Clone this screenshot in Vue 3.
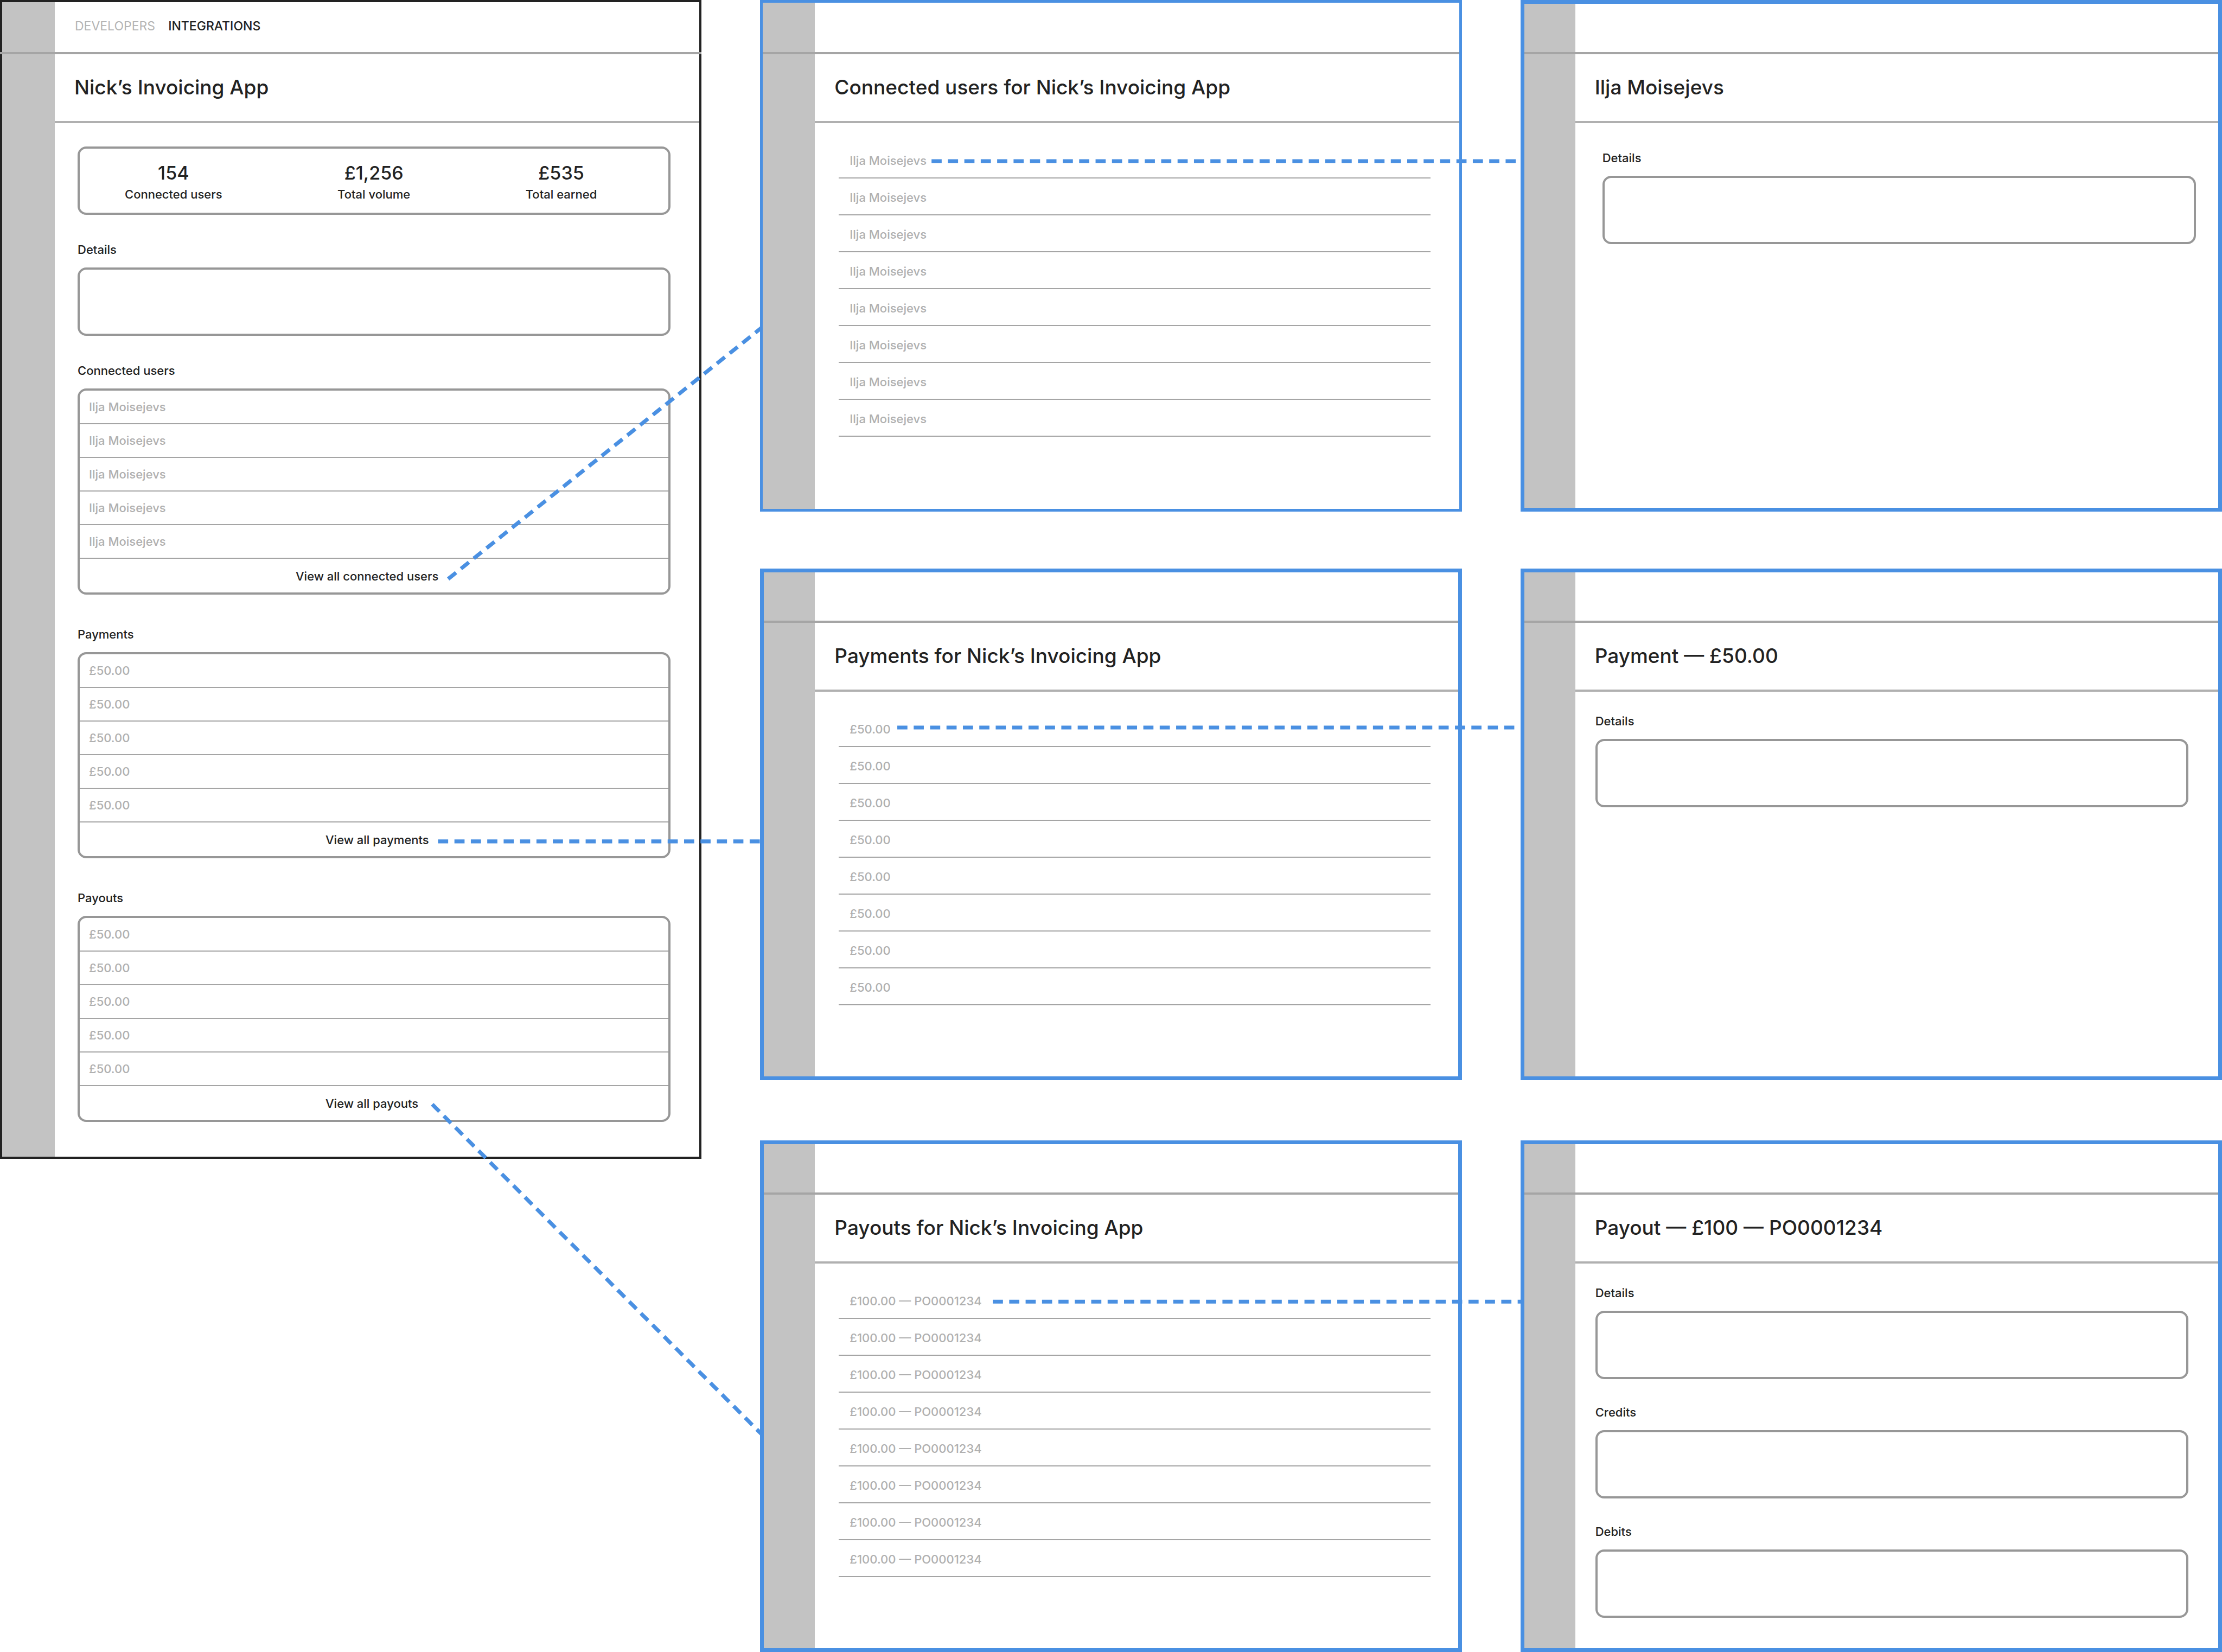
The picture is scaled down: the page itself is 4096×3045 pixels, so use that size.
<script setup>
const appName = 'Nick’s Invoicing App'

const stats = [
  { value: '154', label: 'Connected users' },
  { value: '£1,256', label: 'Total volume' },
  { value: '£535', label: 'Total earned' },
]

const sections = [
  { id: 'users', title: 'Connected users', item: 'Ilja Moisejevs', more: 'View all connected users' },
  { id: 'payments', title: 'Payments', item: '£50.00', more: 'View all payments' },
  { id: 'payouts', title: 'Payouts', item: '£50.00', more: 'View all payouts' },
]

const lists = [
  { id: 'all-users', title: `Connected users for ${appName}`, item: 'Ilja Moisejevs', thin: true },
  { id: 'all-payments', title: `Payments for ${appName}`, item: '£50.00' },
  { id: 'all-payouts', title: `Payouts for ${appName}`, item: '£100.00 — PO0001234' },
]

const details = [
  { id: 'user', title: 'Ilja Moisejevs', panels: ['Details'], inset: true },
  { id: 'payment', title: 'Payment — £50.00', panels: ['Details'] },
  { id: 'payout', title: 'Payout — £100 — PO0001234', panels: ['Details', 'Credits', 'Debits'] },
]

const connectors = [
  { x1: 929, y1: 1200, x2: 1579, y2: 679 },
  { x1: 908, y1: 1744, x2: 1578, y2: 1744 },
  { x1: 896, y1: 2289, x2: 1579, y2: 2973 },
  { x1: 1931, y1: 334, x2: 3152, y2: 334 },
  { x1: 1860, y1: 1508, x2: 3152, y2: 1508 },
  { x1: 2058, y1: 2698, x2: 3154, y2: 2698 },
]
</script>

<template>
  <div class="board">
    <section class="frame frame--source">
      <aside class="sidebar"></aside>
      <nav class="topbar">
        <a class="tab" href="#developers">DEVELOPERS</a>
        <a class="tab tab--active" href="#integrations">INTEGRATIONS</a>
      </nav>
      <header class="heading"><h1 class="title">{{ appName }}</h1></header>
      <main class="content content--source">
        <div class="card stats">
          <div v-for="stat in stats" :key="stat.label" class="stat">
            <span class="stat-value">{{ stat.value }}</span>
            <span class="stat-label">{{ stat.label }}</span>
          </div>
        </div>
        <section class="block">
          <h2 class="label">Details</h2>
          <div class="card"></div>
        </section>
        <div class="block-group">
          <section v-for="section in sections" :key="section.id" class="block">
            <h2 class="label">{{ section.title }}</h2>
            <ul class="card table">
              <li v-for="n in 5" :key="n" class="table-row">{{ section.item }}</li>
              <li class="table-row table-row--more" :class="`table-row--${section.id}`">
                <a class="more" :href="`#all-${section.id}`">{{ section.more }}</a>
              </li>
            </ul>
          </section>
        </div>
      </main>
    </section>

    <div class="column">
      <section
        v-for="list in lists"
        :id="list.id"
        :key="list.id"
        class="frame frame--target"
        :class="{ 'frame--thin': list.thin }"
      >
        <aside class="sidebar"></aside>
        <div class="topbar"></div>
        <header class="heading"><h1 class="title">{{ list.title }}</h1></header>
        <main class="content content--list">
          <ul class="list">
            <li v-for="n in 8" :key="n" class="list-row">{{ list.item }}</li>
          </ul>
        </main>
      </section>
    </div>

    <div class="column">
      <section v-for="detail in details" :id="detail.id" :key="detail.id" class="frame frame--target">
        <aside class="sidebar"></aside>
        <div class="topbar"></div>
        <header class="heading"><h1 class="title">{{ detail.title }}</h1></header>
        <main class="content content--detail" :class="{ 'content--inset': detail.inset }">
          <section v-for="panel in detail.panels" :key="panel" class="block">
            <h2 class="label">{{ panel }}</h2>
            <div class="card"></div>
          </section>
        </main>
      </section>
    </div>

    <svg class="connectors" viewBox="0 0 4606 3424" aria-hidden="true">
      <line v-for="(line, i) in connectors" :key="i" v-bind="line" />
    </svg>
  </div>
</template>

<style>
body {
  margin: 0;
  background: #ffffff;
}
</style>

<style scoped>
.board {
  position: relative;
  display: grid;
  grid-template-columns: repeat(3, minmax(0, 1fr));
  column-gap: 108px;
  align-items: start;
  color: #222222;
  font-family: Inter, "Open Sans", sans-serif;
  font-size: 22px;
  font-weight: 500;
  line-height: 28px;
}

.column {
  display: grid;
  grid-template-rows: 1048px 1054px auto;
  align-items: start;
}

.frame {
  display: grid;
  grid-template-columns: 101px minmax(0, 1fr);
  grid-template-rows: 100px 127px 1fr;
  box-sizing: border-box;
  background: #ffffff;
}

.frame--source {
  outline: 4px solid #222222;
  outline-offset: -4px;
}

.frame--target {
  min-height: 943px;
  outline: 7px solid #4a90e2;
  outline-offset: -7px;
}

.frame--thin {
  outline-width: 5px;
  outline-offset: -5px;
}

.sidebar {
  grid-area: 1 / 1 / 4 / 2;
  background: #c3c3c3;
}

.topbar {
  grid-area: 1 / 1 / 2 / 3;
  display: flex;
  align-items: center;
  gap: 24px;
  padding-left: 138px;
  border-bottom: 4px solid #a5a5a5;
}

.frame--source .topbar {
  position: relative;
}

.tab {
  color: #b4b4b4;
  font-size: 23px;
  font-weight: 400;
  text-decoration: none;
}

.tab--active {
  color: #222222;
  font-weight: 500;
}

.heading {
  grid-area: 2 / 2 / 3 / 3;
  display: flex;
  align-items: center;
  padding: 0 0 2px 36px;
  border-bottom: 4px solid #b0b0b0;
}

.title {
  margin: 0;
  font-size: 37px;
  font-weight: 500;
  line-height: 44px;
}

.content {
  grid-area: 3 / 2 / 4 / 3;
}

.content--source {
  display: flex;
  flex-direction: column;
  gap: 50px;
  padding: 43px 57px 68px 42px;
}

.content--list {
  padding: 34px 58px 0 44px;
}

.content--detail {
  display: flex;
  flex-direction: column;
  gap: 47px;
  padding: 40px 62px 0 37px;
}

.content--inset {
  padding: 50px 48px 0 50px;
}

.block {
  display: flex;
  flex-direction: column;
  gap: 19px;
}

.block-group {
  display: flex;
  flex-direction: column;
  gap: 59px;
}

.label {
  margin: 0;
  font-size: 22px;
  font-weight: 500;
  line-height: 28px;
}

.card {
  box-sizing: border-box;
  min-height: 126px;
  margin: 0;
  border: 4px solid #979797;
  border-radius: 16px;
}

.stats {
  display: flex;
  align-items: center;
  justify-content: space-between;
  padding: 0 132px 0 83px;
}

.stat {
  display: flex;
  flex-direction: column;
  align-items: center;
}

.stat-value {
  font-size: 34px;
  line-height: 50px;
}

.table,
.list {
  padding: 0;
  list-style: none;
}

.list {
  margin: 0;
}

.table-row {
  height: 60px;
  padding-left: 17px;
  border-bottom: 2px solid #a5a5a5;
  color: #b0b0b0;
  line-height: 60px;
}

.table-row--more {
  padding-left: 453px;
  border-bottom-color: transparent;
  line-height: 64px;
}

.table-row--users.table-row--more {
  padding-left: 398px;
}

.more {
  color: #222222;
  text-decoration: none;
}

.list-row {
  padding: 4px 0 0 20px;
  border-bottom: 2px solid #a5a5a5;
  color: #b0b0b0;
  line-height: 62px;
}

.connectors {
  position: absolute;
  top: 0;
  left: 0;
  width: 100%;
  pointer-events: none;
  stroke: #4a90e2;
  stroke-width: 8;
  stroke-dasharray: 21 13;
}
</style>
